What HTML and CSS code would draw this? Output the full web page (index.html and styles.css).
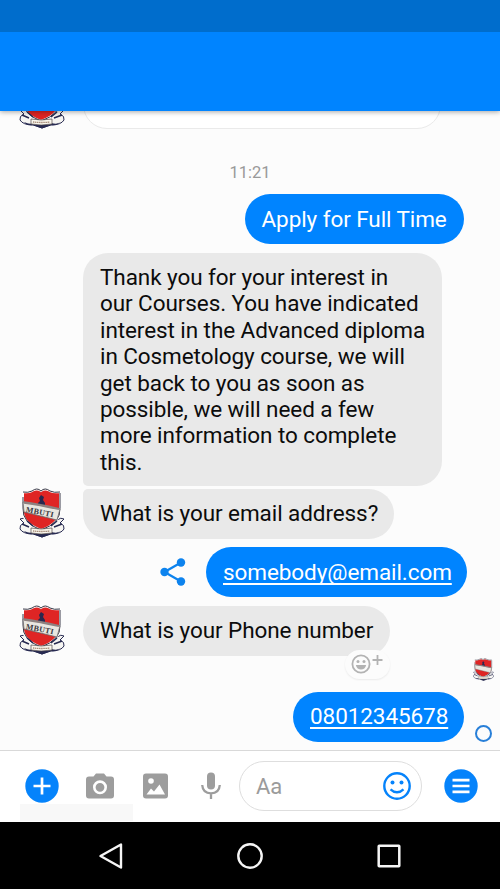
FILE: index.html
```html
<!DOCTYPE html>
<html lang="en">
<head>
<meta charset="utf-8">
<title>Messages</title>
<link rel="stylesheet" href="styles.css">
</head>
<body>
<svg class="defs" width="0" height="0" aria-hidden="true">
  <symbol id="crest" viewBox="0 0 46 50">
    <path d="M1 31Q4 29 8 32L14 37H32L38 32Q42 29 45 31L41 35Q46 37 45 41Q42 46 32 46L23 49L14 46Q4 46 1 41Q0 37 5 35Z" fill="#f6f5f2" stroke="#272a51" stroke-width="1"/>
    <path d="M4 4Q9 5 13 3Q18 0 22 3Q26 0 31 3Q35 5 41 4V20Q42 35 22 42Q2 35 4 20Z" fill="#df2524" stroke="#fff" stroke-width="2"/>
    <path d="M4 4Q9 5 13 3Q18 -1 22 3Q26 -1 31 3Q35 5 41 4M4 9V20Q3 35 22 42Q42 35 41 20V5" fill="none" stroke="#373746" stroke-width="1"/>
    <path d="M22 7L25 9L24 12L26 15V18H19V15L21 13L20 10Z" fill="#29284e"/>
    <path d="M4 14L41 21L38 32L5 24Z" fill="#e9e7e0" stroke="#68676a" stroke-width=".8"/>
    <path d="M5 14.500Q18 16 40 21" fill="none" stroke="#8d8180" stroke-width="2.300"/>
    <path d="M5 43Q11 46 14 44L21 46L32 44Q39 46 41 43Q38 47 32 46L23 49.500L14 46Q8 47 5 43Z" fill="#272a51"/>
    <path d="M3 36L10 39M8 33L14 38M38 33L32 38M43 36L35 39" stroke="#272a51" stroke-width="1.500"/>
    <path d="M12 40Q22 42 33 40V45Q22 47 12 45Z" fill="#faf7ed" stroke="#4e4548" stroke-width=".7"/>
    <path d="M14 43Q22 44 31 43" fill="none" stroke="#a58a78" stroke-width="1.3" stroke-dasharray="1.5 .6"/>
  </symbol>
</svg>
<div class="screen">
  <div class="status"></div>
  <header class="header"></header>
  <main class="chat">
    <div class="row first"><svg class="avatar"><use href="#crest"/></svg><div class="card"></div></div>
    <time class="time">11:21</time>
    <div class="row sent apply"><div class="bubble blue">Apply for Full Time</div></div>
    <div class="row thanks"><div class="bubble gray long">Thank you for your interest in<br>our Courses. You have indicated<br>interest in the Advanced diploma<br>in Cosmetology course, we will<br>get back to you as soon as<br>possible, we will need a few<br>more information to complete<br>this.</div></div>
    <div class="row question"><svg class="avatar" viewBox="0 0 46 50"><use href="#crest"/><text x="7" y="24" transform="rotate(11 7 22)" textLength="28" class="crest-name">MBUTI</text></svg><div class="bubble gray joined">What is your email address?</div></div>
    <div class="row sent email">
      <svg class="share" viewBox="0 0 26 28"><path d="M21 4.5L4.5 14L21 23.5" fill="none" stroke="#0d83ee" stroke-width="2.3"/><g fill="#0d83ee"><circle cx="21" cy="4.5" r="4.2"/><circle cx="4.5" cy="14" r="4.2"/><circle cx="21" cy="23.5" r="4.2"/></g></svg>
      <div class="bubble blue link">somebody@email.com</div>
    </div>
    <div class="row phone"><svg class="avatar" viewBox="0 0 46 50"><use href="#crest"/><text x="7" y="24" transform="rotate(11 7 22)" textLength="28" class="crest-name">MBUTI</text></svg>
      <div class="bubble gray ask">What is your Phone number
        <span class="react"><svg viewBox="0 0 44 29"><g fill="none" stroke="#b3b3b3" stroke-width="1.8"><circle cx="16" cy="14" r="8.6"/><path d="M27.500 10H37.500M32.500 5V15"/></g><g fill="#b3b3b3"><circle cx="13" cy="11.500" r="1.5"/><circle cx="19" cy="11.500" r="1.500"/><path d="M10.800 15H21.200Q20 19.500 16 19.500Q12 19.500 10.800 15Z"/></g></svg></span>
      </div>
    </div>
    <div class="seen"><svg><use href="#crest"/></svg></div>
    <div class="row sent number"><div class="bubble blue link">08012345678</div><span class="pending"></span></div>
  </main>
  <footer class="composer">
    <svg class="plus" viewBox="0 0 34 34"><circle cx="17" cy="17" r="16.700" fill="#0583fb"/><path d="M8.500 17H25.500M17 8.500V25.500" stroke="#fff" stroke-width="2.700"/></svg>
    <svg class="camera" viewBox="0 0 28 26"><path d="M3 3.500H7.500L10 .5H18L20.500 3.500H25Q28 3.500 28 6.500V22.500Q28 25.500 25 25.500H3Q0 25.500 0 22.500V6.500Q0 3.500 3 3.500Z" fill="#9d9d9d"/><circle cx="14" cy="14.300" r="5.700" fill="#9d9d9d" stroke="#fff" stroke-width="2.600"/></svg>
    <svg class="photo" viewBox="0 0 25 26"><rect y=".5" width="25" height="25" rx="3" fill="#9d9d9d"/><circle cx="8" cy="8" r="2.800" fill="#fff"/><path d="M3.500 21.500L8 15.500L11 18.500L16.500 11.500L22 21.500Z" fill="#fff"/></svg>
    <svg class="mic" viewBox="0 0 20 28"><rect x="6" y=".5" width="8" height="17" rx="4" fill="#9d9d9d"/><path d="M1.200 13Q1.800 21.300 10 21.300Q18.200 21.300 18.800 13M10 21V27" fill="none" stroke="#9d9d9d" stroke-width="2.300"/></svg>
    <div class="input"><span>Aa</span><svg viewBox="0 0 28 28"><circle cx="14" cy="14" r="12.700" fill="none" stroke="#0583fb" stroke-width="2.400"/><g fill="#0583fb"><circle cx="9.500" cy="10.500" r="2"/><circle cx="18.500" cy="10.500" r="2"/></g><path d="M7.500 17.300Q14 23.300 20.500 17.300" fill="none" stroke="#0583fb" stroke-width="2.400"/></svg></div>
    <svg class="menu" viewBox="0 0 34 34"><circle cx="17" cy="17" r="16.700" fill="#0583fb"/><path d="M8.500 11.200H25.500M8.500 17H25.500M8.500 22.800H25.500" stroke="#fff" stroke-width="2.700"/></svg>
    <div class="strip"></div>
  </footer>
  <nav class="nav">
    <svg viewBox="0 0 28 28"><path d="M24 2.500V25.500L3.500 14Z" fill="none" stroke="#f5f5f5" stroke-width="2.400" stroke-linejoin="round"/></svg>
    <svg viewBox="0 0 28 28"><circle cx="14" cy="14" r="11.700" fill="none" stroke="#f5f5f5" stroke-width="2.400"/></svg>
    <svg viewBox="0 0 28 28"><rect x="3.700" y="3.700" width="20.600" height="20.600" rx=".5" fill="none" stroke="#f5f5f5" stroke-width="2.500"/></svg>
  </nav>
</div>
</body>
</html>
```
FILE: styles.css
```css
* { box-sizing: border-box; }
body { margin: 0; font-family: Roboto, sans-serif; }
svg { display: block; flex: none; }
.defs { position: absolute; }
.screen { width: 500px; height: 889px; display: flex; flex-direction: column; overflow: hidden; }
.status { height: 32px; flex: none; background: #006dcc; z-index: 2; }
.header { height: 79px; flex: none; background: #0084ff; box-shadow: 0 1px 5px rgba(0,0,0,.35); z-index: 1; }
.chat { height: 639px; flex: none; background: #fcfcfc; overflow: hidden; display: flex; flex-direction: column; }
.row { display: flex; flex: none; height: 50px; padding-left: 83px; }
.avatar { width: 46px; height: 50px; margin: -1px 18px 0 -64px; }
.first { margin-top: -32px; }
.first .avatar { margin-top: 0; }
.card { width: 358px; height: 50px; border: 1px solid #eaeaea; border-radius: 24px; background: #fff; }
.time { height: 20px; margin-top: 34px; text-align: center; color: #999; font-size: 16.5px; line-height: 20px; }
.bubble { position: relative; flex: none; height: 50px; padding: 0 17px; border-radius: 25px; font-size: 22.5px; letter-spacing: -.08px; line-height: 49px; white-space: nowrap; }
.blue { background: #0084ff; color: #fff; }
.gray { background: #e9e9e9; color: #0c0c0c; }
.sent { padding: 0 36px 0 0; justify-content: flex-end; }
.apply { margin-top: 11px; }
.apply .bubble { width: 219.5px; line-height: 50px; }
.thanks { height: 233px; margin-top: 9px; }
.long { width: 359px; height: 233px; padding-top: 11px; line-height: 26.4px; border-radius: 25px 25px 25px 5px; }
.question { margin-top: 3px; }
.joined { width: 311px; border-radius: 5px 25px 25px 25px; }
.email { margin-top: 8px; padding-right: 33px; align-items: center; }
.share { width: 26px; height: 28px; margin-right: 20px; }
.email .bubble { width: 261px; line-height: 50px; }
.link { text-decoration: underline; text-decoration-thickness: 1.5px; text-underline-offset: 2.5px; text-decoration-skip-ink: none; }
.phone { margin-top: 9px; }
.ask { width: 307px; }
.react { position: absolute; right: 0; top: 44px; width: 45px; height: 29px; border-radius: 15px; background: #fcfcfc; box-shadow: 0 1px 2px rgba(0,0,0,.07); }
.react svg { width: 44px; height: 29px; }
.seen { height: 24px; margin-top: 2px; padding-left: 473px; }
.seen svg { width: 21px; height: 23px; }
.number { margin-top: 10px; padding-right: 8px; }
.number .bubble { width: 171px; }
.pending { width: 17px; height: 17px; margin: 33px 0 0 11px; border: 2px solid #287fd8; border-radius: 50%; }
.composer { position: relative; height: 72px; flex: none; border-top: 1px solid #d9d9d9; background: #fff; display: grid; grid-template-columns: 61px 57px 58px 38.5px 205px 34px; grid-template-rows: 70px; align-items: center; padding-left: 24.5px; }
.plus, .menu { width: 34px; height: 34px; }
.plus { z-index: 1; }
.camera { width: 28px; height: 26px; }
.photo { width: 25px; height: 26px; }
.mic { width: 20px; height: 28px; }
.input { width: 183px; height: 50px; border: 1.5px solid #dedede; border-radius: 25px; display: flex; align-items: center; justify-content: space-between; padding: 0 10px 0 16px; color: #9b9b9b; font-size: 22px; }
.input svg { width: 28px; height: 28px; }
.strip { position: absolute; left: 20px; bottom: 1px; width: 113px; height: 17px; background: #f8f8f8; }
.nav { height: 67px; flex: none; background: #000; display: flex; justify-content: space-between; align-items: center; padding: 0 97px; }
.nav svg { width: 28px; height: 28px; }
.crest-name { font-family: "Liberation Serif", serif; font-size: 8px; font-weight: bold; fill: #3c3941; }
```
